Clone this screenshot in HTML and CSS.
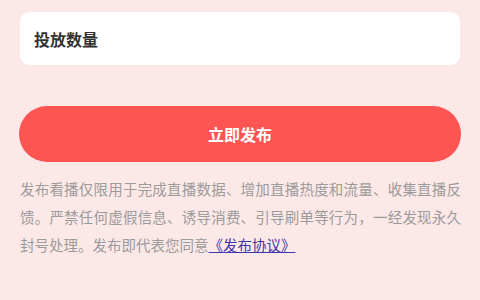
FILE: index.html
```html
<!DOCTYPE html>
<html lang="zh-CN">
<head>
  <meta charset="UTF-8" />
  <meta name="viewport" content="width=device-width, initial-scale=1.0"/>
  <title>发布看播</title>
  <link rel="stylesheet" href="styles.css">
</head>
<body>
  <div class="page">
    <div class="card">
      <label>投放数量</label>
    </div>

    <button class="publish">立即发布</button>

    <p class="notice">
      发布看播仅限用于完成直播数据、增加直播热度和流量、收集直播反馈。严禁任何虚假信息、诱导消费、引导刷单等行为，一经发现永久封号处理。发布即代表您同意<a href="#">《发布协议》</a>
    </p>
  </div>
</body>
</html>
```

FILE: styles.css
```css
body {
  margin: 0;
  background-color: #fde8e8;
  font-family: "Noto Sans CJK SC", "Noto Sans", sans-serif;
}

.page {
  padding: 12px 19px 0 20px;
}

.card {
  height: 53px;
  margin-right: 1px;
  padding: 0 14px;
  background-color: #fff;
  border-radius: 9px;
  display: flex;
  align-items: center;
}

.card label {
  font-size: 16px;
  font-weight: bold;
  color: #333;
}

.publish {
  display: block;
  width: calc(100% + 1px);
  height: 56px;
  margin: 41px 0 0 -1px;
  border: none;
  border-radius: 28px;
  background-color: #fe5552;
  color: #fff;
  font-family: inherit;
  font-size: 16px;
  font-weight: bold;
}

.notice {
  margin: 13px 0 0;
  font-size: 14.5px;
  line-height: 28px;
  color: #9b9b9b;
  text-align: justify;
}

.notice a {
  color: #3b37a8;
}
```
